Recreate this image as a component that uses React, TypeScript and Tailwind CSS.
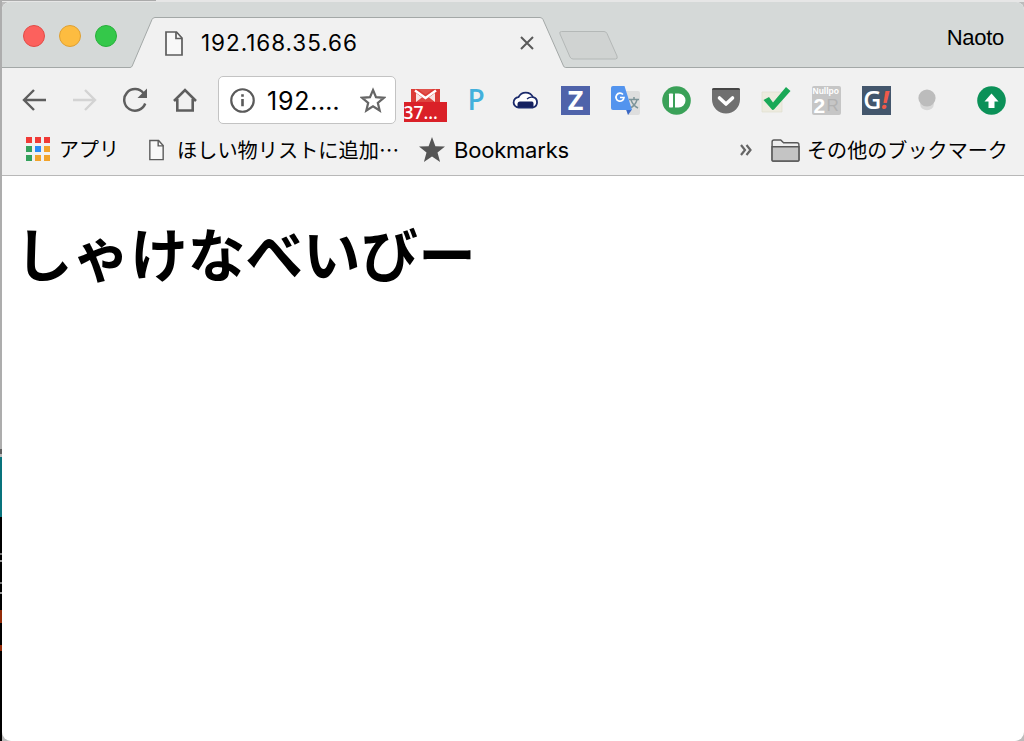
import { FC, ReactNode } from "react";
import clsx from "clsx";

interface ChildrenProps {
  children: ReactNode;
  className?: string;
}

// apps launcher grid, row by row
const appColors = [
  "#f03a36", "#f03a36", "#f03a36",
  "#34a15c", "#2a8cf5", "#f2a32b",
  "#34a15c", "#f2a32b", "#f2a32b",
];

const Cell: FC<ChildrenProps> = ({ children, className }) => (
  <div className={clsx("flex h-16 w-[50px] shrink-0 items-center justify-center", className)}>
    {children}
  </div>
);

const PageIcon = ({ className }: { className: string }) => (
  <svg viewBox="0 0 18 25" className={className} fill="none" stroke="#5c5c5c" strokeWidth="1.7">
    <path d="M1 1h10.5L17 7v17H1z" fill="#f8f8f8" />
    <path d="M11 1v6.500H17" />
  </svg>
);

/** Strip of the desktop that shows to the left of the window */
const Desktop = () => (
  <div className="flex h-full w-[2px] shrink-0 flex-col bg-black">
    <div className="h-[449px] bg-[#adadad]" />
    <div className="h-[5px] bg-[#606060]" />
    <div className="h-[3px] bg-[#b8b8b8]" />
    <div className="h-[60px] bg-[#08737c]" />
    <div className="mt-9 h-[2px] bg-[#777]" />
    <div className="mt-[5px] h-[2px] bg-[#999]" />
    <div className="mt-5 h-[2px] bg-[#777]" />
    <div className="mt-[8px] h-[2px] bg-[#999]" />
    <div className="mt-4 h-[13px] bg-[#922b08]" />
    <div className="mt-[22px] h-[6px] bg-[#922b08]" />
  </div>
);

const TitleBar = () => (
  <div className="relative h-[66px]">
    <svg viewBox="2 2 1022 66" className="absolute inset-0 h-full w-full">
      <path
        d="M2 67.500H130q1.500 0 2.200-1.500L152 19.500q1-2 3-2H540q2 0 3 2L563.500 66q.700 1.500 2.200 1.500H1024V69H2z"
        fill="#f1f1f1"
      />
      <path
        d="M2 67.500H130q1.500 0 2.200-1.500L152 19.500q1-2 3-2H540q2 0 3 2L563.500 66q.700 1.500 2.200 1.500H1024"
        fill="none"
        stroke="#a3a8a7"
      />
      <path
        d="M561.500 31.500H604q2 0 3 2L617 56q1 3-1.500 3H573q-2 0-3-2L560 34q-1-2.500 1.500-2.500z"
        fill="#d0d3d2"
        stroke="#b4b8b7"
      />
    </svg>
    <div className="relative flex h-full items-center">
      <div className="mt-[2px] ml-[21px] flex gap-[14px]">
        <div className="size-[22px] rounded-full border border-[#e24b46] bg-[#fc615d]" />
        <div className="size-[22px] rounded-full border border-[#dfa032] bg-[#fdbc40]" />
        <div className="size-[22px] rounded-full border border-[#27b03a] bg-[#34c84a]" />
      </div>
      <PageIcon className="mt-[16px] ml-[48px] h-[25px] w-[18px]" />
      <span className="mt-[16px] ml-[18px] w-[160px] font-['Inter','Liberation_Sans',sans-serif] text-[22.500px] tracking-[0.95px]">
        192.168.35.66
      </span>
      <svg viewBox="0 0 14 14" className="mt-[16px] ml-[159px] size-[14px]" stroke="#5a5a5a" strokeWidth="2">
        <path d="M1 1l12 12M13 1L1 13" />
      </svg>
      <span className="mt-[5px] mr-[20px] ml-auto font-['Liberation_Sans',sans-serif] text-[22px] tracking-[-0.300px]">
        Naoto
      </span>
    </div>
  </div>
);

const Navigation = () => (
  <div className="ml-[7px] flex">
    <Cell>
      <svg viewBox="0 0 24 22" className="h-[22px] w-6" fill="none" stroke="#5e5e5e" strokeWidth="2.400">
        <path d="M12 1L2 11l10 10M2 11h22" />
      </svg>
    </Cell>
    <Cell>
      <svg viewBox="0 0 24 22" className="ml-px h-[22px] w-6" fill="none" stroke="#d3d3d3" strokeWidth="2.400">
        <path d="M12 1l10 10-10 10M22 11H0" />
      </svg>
    </Cell>
    <Cell>
      <svg viewBox="0 0 26 26" className="ml-px size-[26px]">
        <path d="M21.500 6.200A10.800 10.800 0 1 0 23.200 16.500" fill="none" stroke="#5e5e5e" strokeWidth="2.500" />
        <path d="M25 1.500v9.500h-9.500z" fill="#5e5e5e" />
      </svg>
    </Cell>
    <Cell>
      <svg viewBox="0 0 24 24" className="ml-px size-6" fill="none" stroke="#5e5e5e" strokeWidth="2.600">
        <path d="M1 13L12 2l11 11M4.300 11v11.500h15.400V11" />
      </svg>
    </Cell>
  </div>
);

const Omnibox = () => (
  <div className="ml-[9px] flex h-12 w-[178px] shrink-0 items-center rounded-[5px] border border-[#c3c3c3] bg-white">
    <svg viewBox="0 0 24 24" className="ml-[11px] size-[25px] shrink-0" fill="none" stroke="#5a5a5a" strokeWidth="2.100">
      <circle cx="12" cy="12" r="10.800" />
      <path d="M12 10.500v7M12 6v2.500" strokeWidth="2.500" />
    </svg>
    <span className="mt-[3px] ml-[12px] w-[93px] font-['Inter','Liberation_Sans',sans-serif] text-[25px] tracking-[0.75px]">
      192.…
    </span>
    <svg viewBox="0 0 26 26" className="size-[26px] shrink-0" fill="none" stroke="#666" strokeWidth="2.200">
      <path d="M13 3l3 7.200 7.800.600-6 5 1.900 7.700L13 19.300l-6.700 4.200 1.900-7.700-6-5 7.800-.600z" />
    </svg>
  </div>
);

const Extensions = () => (
  <div className="ml-[5px] flex">
    <Cell>
      <div className="mt-[10px] mr-[2px] flex flex-col items-center">
        <svg viewBox="0 0 29 13" className="h-[13px] w-[29px]">
          <path d="M0 0h29v13H0z" fill="#dc3b36" />
          <path d="M5 4v9h19V4l-9.500 7z" fill="#f8e4e2" />
          <path d="M5 13l6.500-5 3 2.500 3-2.500 6.500 5z" fill="#de4640" />
          <path d="M4 1.500L14.500 9 25 1.500" fill="none" stroke="#fff" strokeWidth="2.400" />
          <path d="M7 0l7.500 5.500L22 0z" fill="#e0524b" />
        </svg>
        <div className="h-[20px] w-[43px] bg-[#da2128] font-['Open_Sans',sans-serif] text-[17.500px] leading-[21px] font-semibold text-white">
          37…
        </div>
      </div>
    </Cell>
    <Cell>
      <span className="-mt-[2px] font-['Open_Sans',sans-serif] text-[28px] leading-none font-semibold text-[#43b0dc]">P</span>
    </Cell>
    <Cell>
      <svg viewBox="0 0 28 20" className="h-5 w-7">
        <path
          d="M7 17.500a5 5 0 0 1-.500-10.300A8 8 0 0 1 21 7.200a5.300 5.300 0 0 1 0 10.300z"
          fill="#fff"
          stroke="#1b2a6b"
          strokeWidth="1.800"
        />
        <path d="M15 9q2.500-2.500 6-1.800" fill="none" stroke="#1b2a6b" strokeWidth="1.200" />
        <path d="M8 11.500h12q1.500 0 1.500 2V17H5.500v-3q0-2.500 2.500-2.500z" fill="#15215f" />
      </svg>
    </Cell>
    <Cell>
      <div className="mr-px flex size-[29px] items-center justify-center bg-[#4f63aa] pb-px font-['Open_Sans',sans-serif] text-[27px] leading-none font-bold text-white">
        Z
      </div>
    </Cell>
    <Cell>
      <svg viewBox="0 0 29 29" className="mr-px size-[29px]">
        <path d="M14 5h13q2 0 2 2v20q0 2-2 2H17z" fill="#dedede" />
        <path d="M18 13.500h10M23 11v2.500M20 14q2 5.500 7 8M26 14q-2 6-7 8" fill="none" stroke="#7d9499" strokeWidth="1.500" />
        <path d="M15 23.500h6l-4 5.500z" fill="#3a67c4" />
        <path d="M2 0h11.500L21 24H2q-2 0-2-2V2q0-2 2-2z" fill="#5394ee" />
        <path d="M12 8.500a4 4 0 1 0 1 3H9" fill="none" stroke="#fff" strokeWidth="1.700" />
      </svg>
    </Cell>
    <Cell>
      <svg viewBox="0 0 29 29" className="size-[29px]">
        <circle cx="14.500" cy="14.500" r="14.300" fill="#3aa158" />
        <rect x="7" y="7.500" width="4" height="14" rx=".700" fill="#fff" />
        <path d="M13 7.500h3.500a7 7 0 0 1 0 14H13z" fill="#fff" />
      </svg>
    </Cell>
    <Cell>
      <svg viewBox="0 0 30 27" className="h-[27px] w-[30px]">
        <path d="M1 3q0-2 2-2h24q2 0 2 2v9.500a14 14 0 0 1-28 0z" fill="#707070" />
        <path d="M1 3q0-2 2-2h24q2 0 2 2z" fill="#464646" />
        <path d="M8.500 11l6.500 6 6.500-6" fill="none" stroke="#fff" strokeWidth="3.600" strokeLinecap="round" strokeLinejoin="round" />
      </svg>
    </Cell>
    <Cell>
      <svg viewBox="0 0 30 28" className="h-7 w-[30px]">
        <path d="M1 6h20v20H1z" fill="#edebdf" stroke="#e0dece" strokeWidth=".700" />
        <path d="M2.500 14l5.500-3 4 5.500L25 1l4.500 4L13 23.500q-1.500 1-2.500-.500z" fill="#1aa957" />
      </svg>
    </Cell>
    <Cell>
      <div className="flex size-[29px] flex-col rounded-[2px] bg-[#c6c6c6] font-['Liberation_Sans',sans-serif] font-bold text-white">
        <span className="h-[11px] pl-px text-[8.500px] leading-[11px]">Nullpo</span>
        <div className="flex h-[18px] items-center pl-[2px] leading-[18px]">
          <span className="w-[13px] text-[21px]">2</span>
          <span className="text-[17px] font-normal text-[#b2b2b2]">R</span>
        </div>
      </div>
    </Cell>
    <Cell>
      <div className="flex size-[29px] items-center justify-center bg-[#43566c] pb-px font-['Open_Sans',sans-serif] text-[25px] leading-none font-semibold text-white">
        G<span className="font-bold text-[#ef5a4a] italic">!</span>
      </div>
    </Cell>
    <Cell>
      <svg viewBox="0 0 18 22" className="ml-[2px] h-[22px] w-[18px]">
        <ellipse cx="9" cy="15.500" rx="6.800" ry="5.700" fill="#d8d8d8" />
        <circle cx="9" cy="9" r="8.600" fill="#bcbcbc" />
      </svg>
    </Cell>
    <Cell className="ml-[15px]">
      <svg viewBox="0 0 29 29" className="size-[29px]">
        <circle cx="14.500" cy="14.500" r="14.300" fill="#0b9158" />
        <path d="M14.500 7.500l7 8h-4V22h-6v-6.500h-4z" fill="#fff" />
      </svg>
    </Cell>
  </div>
);

const BookmarksBar = () => (
  <div className="flex h-9 items-center font-['Inter','Noto_Sans_CJK_JP',sans-serif] text-[22px] whitespace-nowrap">
    <div className="-mt-[2px] ml-6 grid shrink-0 grid-cols-3 gap-[3px]">
      {appColors.map((color, i) => (
        <div key={i} className="size-[6px]" style={{ backgroundColor: color }} />
      ))}
    </div>
    <span className="ml-[9px] w-[60px] text-[20px]">アプリ</span>
    <PageIcon className="ml-[30px] h-[22px] w-[15px] shrink-0" />
    <span className="ml-[13px] w-[224px] font-['Noto_Sans_CJK_JP',sans-serif] text-[20.200px]">ほしい物リストに追加⋯</span>
    <svg viewBox="0 0 26 26" className="ml-[18px] size-[26px] shrink-0" fill="#555">
      <path d="M13 0l3.400 9.200 9.600.400-7.500 6L21.100 25 13 19.600 4.900 25l2.600-9.400-7.500-6 9.600-.400z" />
    </svg>
    <span className="ml-[9px] w-[116px] tracking-[-0.200px]">Bookmarks</span>
    <svg viewBox="0 0 12 12" className="ml-[170px] size-3 shrink-0" fill="none" stroke="#666" strokeWidth="2.200">
      <path d="M1 1l4 5-4 5M6.500 1l4 5-4 5" />
    </svg>
    <svg viewBox="0 0 30 24" className="ml-[19px] h-[23px] w-[29px] shrink-0" stroke="#585858" strokeWidth="1.500">
      <path d="M1 22V3q0-2 2-2h7l3 3h14q2 0 2 2v16q0 1-1 1H2q-1 0-1-1z" fill="#eee" />
      <path d="M1 8h28v14q0 1-1 1H2q-1 0-1-1z" fill="#c4c4c4" />
    </svg>
    <span className="mt-[2px] ml-[7px] text-[20.100px]">その他のブックマーク</span>
  </div>
);

export default function App() {
  return (
    <div className="flex h-[741px] w-[1024px] overflow-hidden bg-[#bcbcbc] text-black">
      <Desktop />
      <div className="flex min-w-0 flex-1 flex-col">
        <div className="h-[2px] shrink-0 bg-[#e6e6e6]">
          <div className="h-px w-[154px] bg-[#aaa]" />
        </div>
        <div className="flex min-h-0 flex-1 flex-col overflow-hidden rounded-t-[8px] rounded-b-[9px] bg-white">
          <div className="bg-[#d5d9d8]">
            <TitleBar />
          </div>
          <div className="h-[108px] shrink-0 border-b border-[#b8b8b8] bg-[#f1f1f1]">
            <div className="flex h-16 items-center">
              <Navigation />
              <Omnibox />
              <Extensions />
            </div>
            <BookmarksBar />
          </div>
          <h1 className="mt-[34px] ml-[13px] font-['Noto_Sans_CJK_JP',sans-serif] text-[57.600px] leading-[84px] font-bold whitespace-nowrap">
            しゃけなべいびー
          </h1>
        </div>
      </div>
    </div>
  );
}
